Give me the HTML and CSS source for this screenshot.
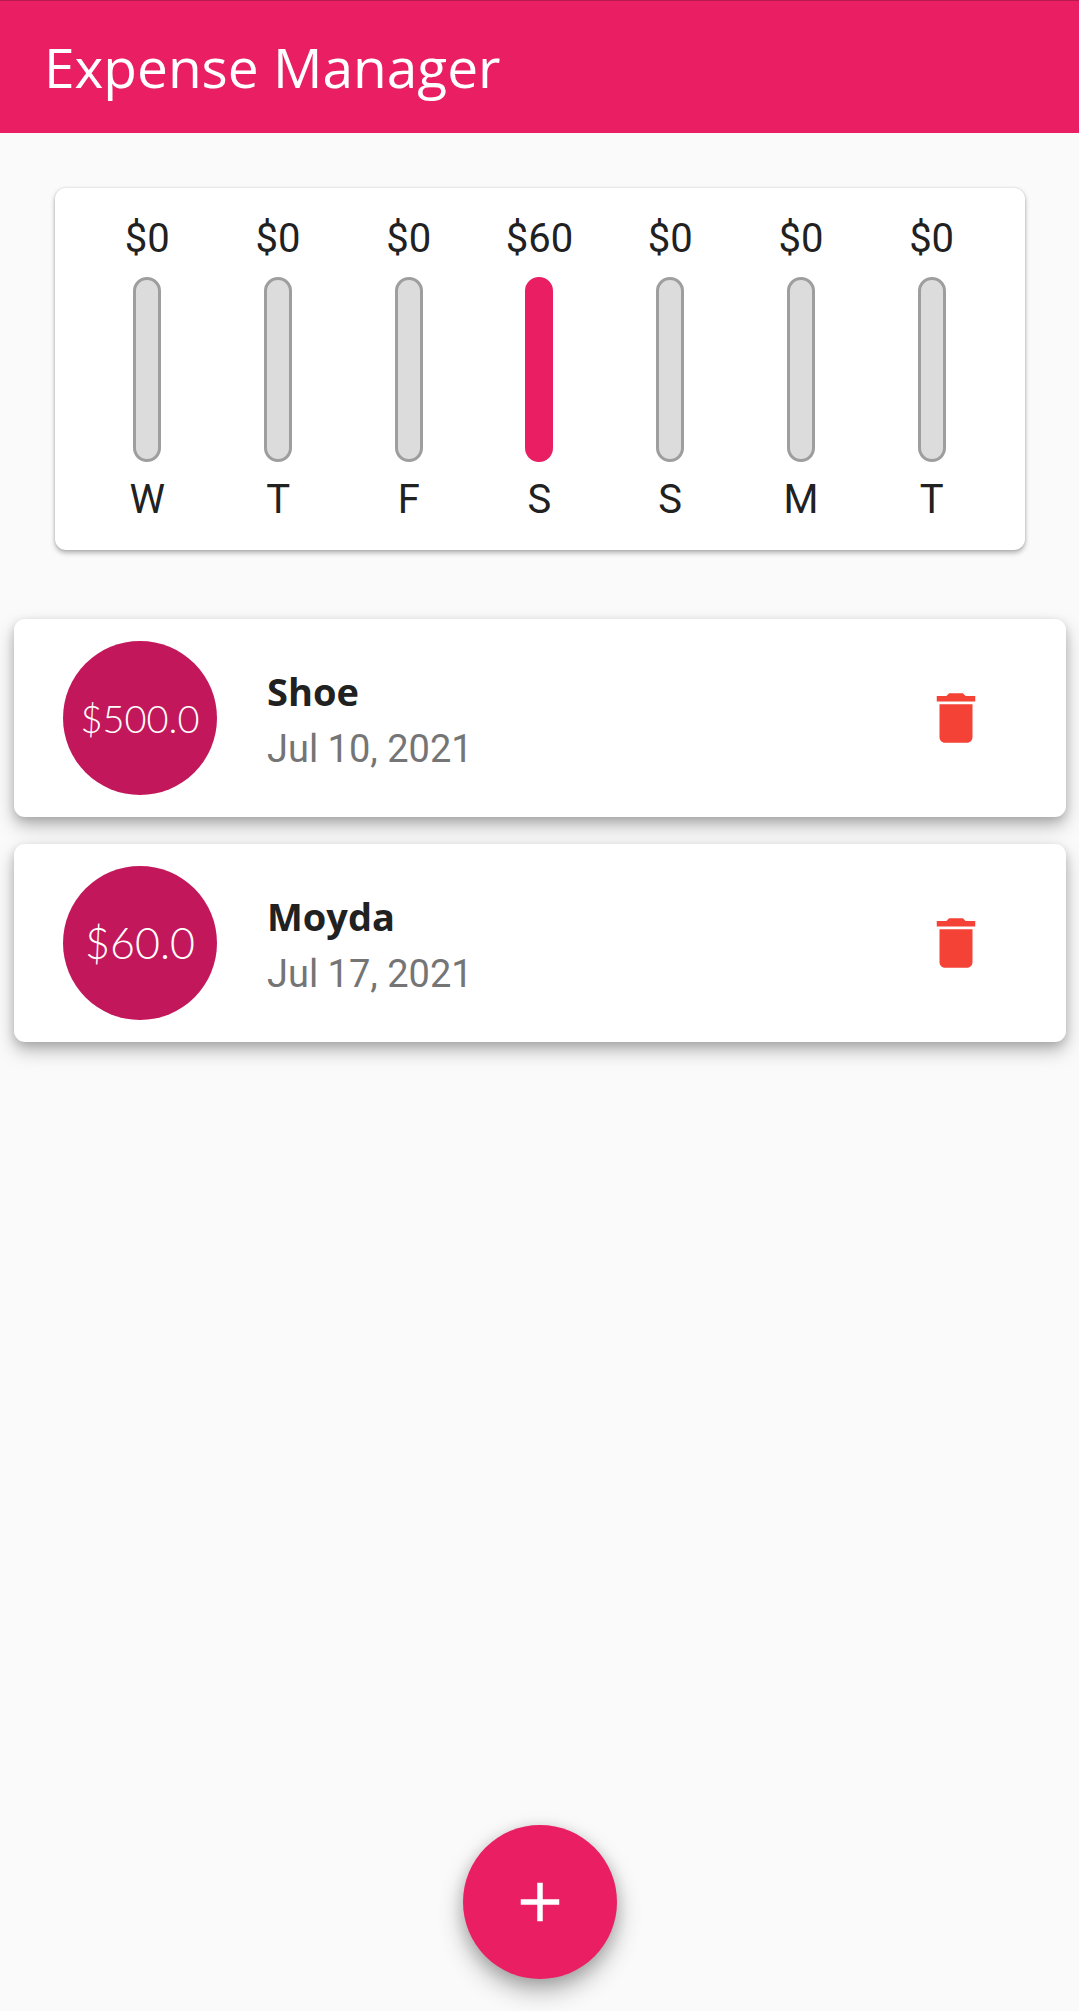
FILE: index.html
```html
<!DOCTYPE html>
<html lang="en">
<head>
<meta charset="utf-8">
<meta name="viewport" content="width=device-width, initial-scale=1">
<title>Expense Manager</title>
<link rel="stylesheet" href="styles.css">
</head>
<body>
<header class="app-bar">
  <h1 class="app-title">Expense Manager</h1>
</header>
<main>
  <section class="chart" aria-label="Spending in the last seven days">
    <div class="day"><span>$0</span><div class="bar"></div><span>W</span></div>
    <div class="day"><span>$0</span><div class="bar"></div><span>T</span></div>
    <div class="day"><span>$0</span><div class="bar"></div><span>F</span></div>
    <div class="day"><span>$60</span><div class="bar bar-full"></div><span>S</span></div>
    <div class="day"><span>$0</span><div class="bar"></div><span>S</span></div>
    <div class="day"><span>$0</span><div class="bar"></div><span>M</span></div>
    <div class="day"><span>$0</span><div class="bar"></div><span>T</span></div>
  </section>
  <ul class="expenses">
    <li class="expense">
      <div class="amount">$500.0</div>
      <div class="details">
        <h2 class="name">Shoe</h2>
        <time class="date" datetime="2021-07-10">Jul 10, 2021</time>
      </div>
      <button class="delete" type="button" aria-label="Delete Shoe">
        <svg class="icon" viewBox="0 0 24 24" aria-hidden="true"><path d="M6 19c0 1.100.9 2 2 2h8c1.100 0 2-.9 2-2V7H6v12zM19 4h-3.500l-1-1h-5l-1 1H5v2h14V4z"/></svg>
      </button>
    </li>
    <li class="expense">
      <div class="amount amount-large">$60.0</div>
      <div class="details">
        <h2 class="name">Moyda</h2>
        <time class="date" datetime="2021-07-17">Jul 17, 2021</time>
      </div>
      <button class="delete" type="button" aria-label="Delete Moyda">
        <svg class="icon" viewBox="0 0 24 24" aria-hidden="true"><path d="M6 19c0 1.100.9 2 2 2h8c1.100 0 2-.9 2-2V7H6v12zM19 4h-3.500l-1-1h-5l-1 1H5v2h14V4z"/></svg>
      </button>
    </li>
  </ul>
</main>
<button class="add" type="button" aria-label="Add expense">
  <svg class="icon" viewBox="0 0 24 24" aria-hidden="true"><path d="M19 13h-6v6h-2v-6H5v-2h6V5h2v6h6v2z"/></svg>
</button>
</body>
</html>
```
FILE: styles.css
```css
* {
  box-sizing: border-box;
}

body {
  margin: 0;
  min-height: 100vh;
  background: #fafafa;
  color: #212121;
  font-family: Roboto, "Liberation Sans", sans-serif;
  font-size: 40px;
  line-height: 48px;
}

h1,
h2 {
  margin: 0;
}

button {
  display: flex;
  align-items: center;
  justify-content: center;
  padding: 0;
  border: 0;
  background: none;
  cursor: pointer;
}

.icon {
  width: 66px;
  height: 66px;
  fill: currentColor;
}

.app-bar {
  padding: 28px 44px 29px;
  border-top: 1px solid #b71a4c;
  background: #e91e63;
  color: #fff;
}

.app-title {
  font-family: "Open Sans", "Noto Sans", sans-serif;
  font-size: 55px;
  font-weight: 400;
  line-height: 75px;
}

.chart {
  display: grid;
  grid-template-columns: repeat(7, 1fr);
  margin: 55px 54px 69px 55px;
  padding: 27px 28px 26px 27px;
  border-radius: 11px;
  background: #fff;
  box-shadow: 0 3px 5px rgba(0, 0, 0, 0.28), 0 0 3px rgba(0, 0, 0, 0.14);
}

.day {
  display: flex;
  flex-direction: column;
  align-items: center;
  gap: 14px;
}

.bar {
  width: 28px;
  height: 185px;
  border: 3px solid #9e9e9e;
  border-radius: 14px;
  background: #dcdcdc;
}

.bar-full {
  border-color: #e91e63;
  background: #e91e63;
}

.expenses {
  display: flex;
  flex-direction: column;
  gap: 27px;
  margin: 0;
  padding: 0 13px 200px 14px;
  list-style: none;
}

.expense {
  display: flex;
  align-items: center;
  gap: 50px;
  padding: 22px 77px 22px 49px;
  border-radius: 11px;
  background: #fff;
  box-shadow: 0 9px 18px rgba(0, 0, 0, 0.26), 0 3px 10px rgba(0, 0, 0, 0.14);
}

.amount {
  display: flex;
  flex: none;
  align-items: center;
  justify-content: center;
  width: 154px;
  height: 154px;
  border-radius: 50%;
  background: #c2185b;
  color: #fff;
  font-family: Lato, sans-serif;
  font-size: 38px;
  font-weight: 300;
}

.amount-large {
  font-size: 43px;
}

.details {
  display: flex;
  flex: 1;
  flex-direction: column;
  gap: 6px;
}

.name {
  font-family: "Open Sans", "Noto Sans", sans-serif;
  font-size: 38px;
  font-weight: 700;
  line-height: 55px;
}

.date {
  color: #757575;
  font-size: 38px;
}

.delete {
  color: #f44336;
}

.add {
  position: fixed;
  bottom: 32px;
  left: 50%;
  width: 154px;
  height: 154px;
  border-radius: 50%;
  background: #e91e63;
  box-shadow: 0 12px 24px rgba(0, 0, 0, 0.3), 0 3px 16px rgba(0, 0, 0, 0.14);
  color: #fff;
  transform: translateX(-50%);
}
```
